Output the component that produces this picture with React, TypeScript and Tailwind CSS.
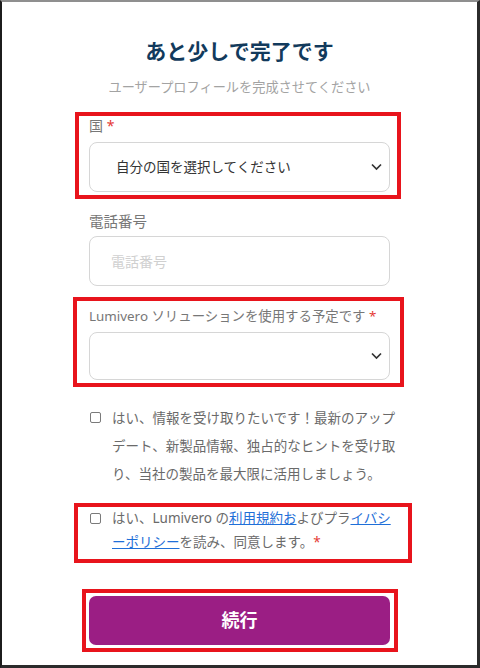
import { FunctionComponent } from "react";

const Chevron: FunctionComponent = (): JSX.Element => (
  <svg
    width="11"
    height="7"
    viewBox="0 0 11 7"
    className="absolute right-[7px] top-1/2 -translate-y-1/2"
  >
    <polyline
      points="1,1 5.5,5.5 10,1"
      fill="none"
      stroke="#333"
      strokeWidth="1.7"
    />
  </svg>
);

// red annotation frame drawn over a block
const Mark: FunctionComponent<{ className: string }> = ({
  className,
}): JSX.Element => (
  <span
    className={`pointer-events-none absolute border-4 border-[#e8141c] ${className}`}
  />
);

const Box: FunctionComponent<{ text?: string; h: string }> = ({
  text,
  h,
}): JSX.Element => (
  <div
    className={`relative w-full ${h} rounded-[8px] border border-[#d6d6d6] bg-white flex items-center`}
  >
    {text && <span className="pl-[26px] text-[13.5px] text-[#333]">{text}</span>}
    <Chevron />
  </div>
);

const Check: FunctionComponent<{ top: string }> = ({ top }): JSX.Element => (
  <span
    className={`shrink-0 ml-[1px] ${top} w-[11px] h-[11px] rounded-[2px] border-[1.5px] border-[#7a7a7a] bg-white`}
  />
);

export default function App(): JSX.Element {
  return (
    <div className="w-[480px] h-[668px] bg-white border-t-2 border-t-[#8f8f8f] border-l-2 border-l-[#1c1c1c] border-r-[3px] border-r-[#2b2b2b] border-b-[3px] border-b-[#2b2b2b] font-['Noto_Sans','Noto_Sans_CJK_JP',sans-serif] overflow-hidden">
      <div className="mx-auto w-[301px] flex flex-col">
        <h1 className="mt-[35px] text-center text-[21px] leading-[28px] font-bold text-[#123a5c]">
          あと少しで完了です
        </h1>
        <p className="mt-[12px] text-center text-[13.2px] leading-[20px] text-[#a3a3a3] whitespace-nowrap">
          ユーザープロフィールを完成させてください
        </p>

        <div className="relative mt-[19px]">
          <Mark className="-left-[14px] -right-[11px] -top-[4px] -bottom-[7px]" />
          <label className="block text-[14px] leading-[20px] text-[#777]">
            国 <span className="text-[#e53935]">*</span>
          </label>
          <div className="mt-[6px]">
            <Box h="h-[50px]" text="自分の国を選択してください" />
          </div>
        </div>

        <div className="mt-[19px]">
          <label className="block text-[14.5px] leading-[20px] text-[#777]">
            電話番号
          </label>
          <div className="mt-[5px] h-[50px] rounded-[8px] border border-[#d6d6d6] flex items-center pl-[21px] text-[14px] text-[#d0d0d0]">
            電話番号
          </div>
        </div>

        <div className="relative mt-[20px]">
          <Mark className="-left-[16px] -right-[14px] -top-[9px] -bottom-[7px]" />
          <label className="block text-[13.4px] leading-[20px] text-[#777] whitespace-nowrap">
            Lumivero ソリューションを使用する予定です{" "}
            <span className="text-[#e53935]">*</span>
          </label>
          <div className="mt-[6px]">
            <Box h="h-[48px]" />
          </div>
        </div>

        <div className="mt-[24px] flex items-start gap-[11px]">
          <Check top="mt-[8px]" />
          <p className="text-[13.5px] leading-[28px] text-[#6a6a6a] whitespace-nowrap">
            はい、情報を受け取りたいです！最新のアップ
            <br />
            デート、新製品情報、独占的なヒントを受け取
            <br />
            り、当社の製品を最大限に活用しましょう。
          </p>
        </div>

        <div className="relative mt-[18px] flex items-start gap-[11px]">
          <Mark className="-left-[15px] -right-[22px] -top-[3px] -bottom-[9px]" />
          <Check top="mt-[7px]" />
          <p className="text-[13.5px] leading-[24px] text-[#6a6a6a] whitespace-nowrap">
            はい、Lumivero の
            <a className="text-[#1f6fd8] underline underline-offset-1">利用規約お</a>
            よびプラ
            <a className="text-[#1f6fd8] underline underline-offset-1">
              イバシ
              <br />
              ーポリシー
            </a>
            を読み、同意します。<span className="text-[#e53935]">*</span>
          </p>
        </div>

        <div className="relative mt-[42px]">
          <Mark className="-left-[7px] -right-[8px] -top-[7px] -bottom-[7px]" />
          <button className="w-full h-[49px] rounded-[7px] bg-[#9b1e84] text-white text-[18px] font-bold">
            続行
          </button>
        </div>
      </div>
    </div>
  );
}
